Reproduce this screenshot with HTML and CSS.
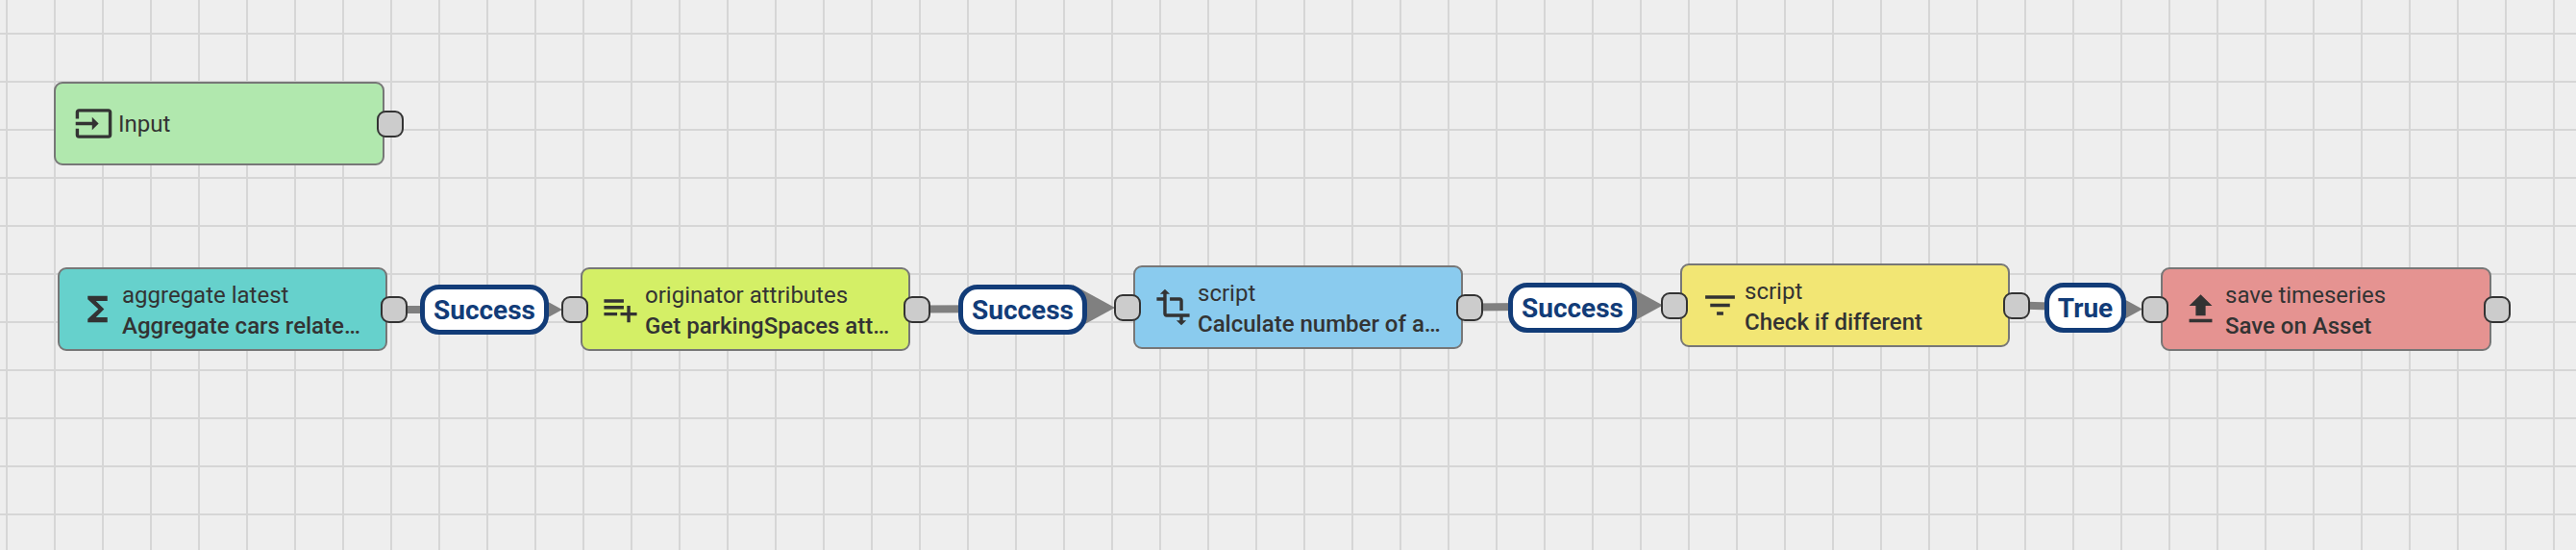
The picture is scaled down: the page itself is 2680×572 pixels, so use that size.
FILE: index.html
```html
<!DOCTYPE html>
<html lang="en">
<head>
<meta charset="utf-8">
<title>Rule chain</title>
<link rel="stylesheet" href="styles.css">
</head>
<body>
<main class="canvas">
  <svg class="edges" width="2680" height="572" viewBox="0 0 2680 572" aria-hidden="true">
    <g class="edge">
      <line x1="410" y1="322" x2="560" y2="322"/>
      <polygon points="585,322 541,298 541,346"/>
    </g>
    <g class="edge">
      <line x1="955" y1="321.500" x2="1130" y2="320.500"/>
      <polygon points="1160,320 1116,296 1116,344"/>
    </g>
    <g class="edge">
      <line x1="1530" y1="319.500" x2="1700" y2="318"/>
      <polygon points="1730,317.500 1686,293.500 1686,341.500"/>
    </g>
    <g class="edge">
      <line x1="2100" y1="317.500" x2="2200" y2="320.500"/>
      <polygon points="2229,321.500 2185,297.500 2185,345.500"/>
    </g>
  </svg>

  <div class="node node-input">
    <svg class="icon" viewBox="0 0 24 24"><path d="M21 3.010H3c-1.100 0-2 .9-2 2V9h2V4.990h18v14.030H3V15H1v4.010c0 1.100.9 1.980 2 1.980h18c1.100 0 2-.88 2-1.980v-14c0-1.110-.9-2-2-2zM11 16l4-4-4-4v3H1v2h10v3z"/></svg>
    <div class="text"><span class="name">Input</span></div>
    <span class="port port-out"></span>
  </div>

  <div class="node node-aggregate">
    <svg class="icon" viewBox="0 0 24 24"><path d="M18 4H6v2l6.500 6L6 18v2h12v-3h-7l5-5-5-5h7z"/></svg>
    <div class="text"><span class="type">aggregate latest</span><span class="name">Aggregate cars relate…</span></div>
    <span class="port port-out"></span>
  </div>

  <div class="node node-originator">
    <svg class="icon" viewBox="0 0 24 24"><path d="M14 10H2v2h12v-2zm0-4H2v2h12V6zm4 8v-4h-2v4h-4v2h4v4h2v-4h4v-2h-4zM2 16h8v-2H2v2z"/></svg>
    <div class="text"><span class="type">originator attributes</span><span class="name">Get parkingSpaces att…</span></div>
    <span class="port port-in"></span>
    <span class="port port-out"></span>
  </div>

  <div class="node node-transform">
    <svg class="icon" viewBox="0 0 24 24"><path d="M22 18v-2H8V4h2L7 1 4 4h2v2H2v2h4v8c0 1.100.9 2 2 2h8v2h-2l3 3 3-3h-2v-2h4zM10 8h6v6h2V8c0-1.100-.9-2-2-2h-6v2z"/></svg>
    <div class="text"><span class="type">script</span><span class="name">Calculate number of a…</span></div>
    <span class="port port-in"></span>
    <span class="port port-out"></span>
  </div>

  <div class="node node-filter">
    <svg class="icon" viewBox="0 0 24 24"><path d="M10 18h4v-2h-4v2zM3 6v2h18V6H3zm3 7h12v-2H6v2z"/></svg>
    <div class="text"><span class="type">script</span><span class="name">Check if different</span></div>
    <span class="port port-in"></span>
    <span class="port port-out"></span>
  </div>

  <div class="node node-action">
    <svg class="icon" viewBox="0 0 24 24"><path d="M9 16h6v-6h4l-7-7-7 7h4zm-4 2h14v2H5z"/></svg>
    <div class="text"><span class="type">save timeseries</span><span class="name">Save on Asset</span></div>
    <span class="port port-in"></span>
    <span class="port port-out"></span>
  </div>

  <span class="label label-1">Success</span>
  <span class="label label-2">Success</span>
  <span class="label label-3">Success</span>
  <span class="label label-4">True</span>
</main>
</body>
</html>
```

FILE: styles.css
```css
* { box-sizing: border-box; }

html, body {
  margin: 0;
  padding: 0;
}

body {
  width: 2680px;
  height: 572px;
  overflow: hidden;
  font-family: Roboto, "Liberation Sans", sans-serif;
  color: #333;
}

.canvas {
  position: relative;
  width: 2680px;
  height: 572px;
  background-color: #eee;
  background-image:
    linear-gradient(to right, #d6d6d6 2px, transparent 2px),
    linear-gradient(to bottom, #d6d6d6 2px, transparent 2px);
  background-size: 50px 50px;
  background-position: 6px 34px;
}

.edges {
  position: absolute;
  left: 0;
  top: 0;
}

.edge line {
  stroke: #808080;
  stroke-width: 8;
}

.edge polygon {
  fill: #808080;
}

.node {
  position: absolute;
  display: flex;
  align-items: center;
  gap: 5px;
  width: 343px;
  height: 87px;
  padding-left: 19px;
  border: 2px solid #777;
  border-radius: 9px;
}

.icon {
  flex: none;
  width: 41px;
  height: 41px;
  fill: #333;
}

.text {
  display: flex;
  flex-direction: column;
  padding-top: 2px;
  white-space: nowrap;
  font-size: 24px;
  line-height: 32px;
}

.name { font-weight: 500; }

.node-input .text { padding-top: 0; }
.node-input .name { font-weight: 400; }

.port {
  position: absolute;
  top: 50%;
  width: 28px;
  height: 28px;
  margin-top: -14px;
  background: #ccc;
  border: 2.5px solid #333;
  border-radius: 9px;
}

.port-in { left: -22px; }
.port-out { right: -23px; }
.node-input .port-out,
.node-action .port-out { right: -22px; }

.node-input { left: 56px; top: 85px; width: 344px; background: #b1e8ae; }
.node-aggregate { left: 60px; top: 278px; background: #66d1cc; }
.node-originator { left: 604px; top: 278px; background: #d4ef66; }
.node-transform { left: 1179px; top: 276px; background: #8acbee; }
.node-filter { left: 1748px; top: 274px; background: #f2e674; }
.node-action { left: 2248px; top: 278px; width: 344px; background: #e59391; }

.label {
  position: absolute;
  display: flex;
  align-items: center;
  justify-content: center;
  height: 52px;
  background: #fff;
  border: 5px solid #123c78;
  border-radius: 20px;
  color: #123c78;
  font-size: 28px;
  font-weight: 700;
}

.label-1 { left: 437px; top: 296px; width: 134px; }
.label-2 { left: 997px; top: 296px; width: 134px; }
.label-3 { left: 1569px; top: 294px; width: 134px; }
.label-4 { left: 2127px; top: 294px; width: 85px; }
```
